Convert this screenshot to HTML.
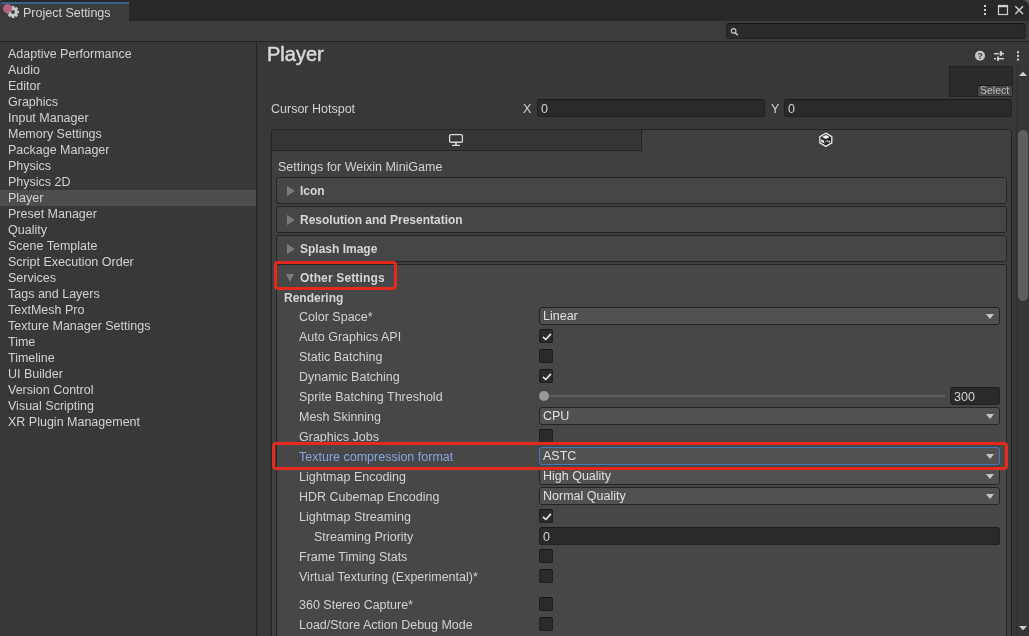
<!DOCTYPE html>
<html><head><meta charset="utf-8">
<style>
*{margin:0;padding:0;box-sizing:border-box}
html,body{width:1029px;height:636px;overflow:hidden;background:#383838;font-family:"Liberation Sans",sans-serif;font-size:12.5px;color:#d2d2d2}
.a{position:absolute}
#titlebar{left:0;top:0;width:1029px;height:21px;background:#282828;border-top-right-radius:7px;border-top-left-radius:4px}
#tab{left:0;top:2px;width:129px;height:19px;background:#3c3c3c;border-top:2px solid #37628e;border-top-left-radius:3px}
#tabtext{left:23px;top:5px;line-height:16px;color:#d4d4d4;white-space:nowrap}
#toolbar{left:0;top:21px;width:1029px;height:20px;background:#3c3c3c}
#search{left:726px;top:23px;width:300px;height:16px;background:#2a2a2a;border:1px solid #232323;border-top-color:#141414;border-radius:3px}
#tline{left:0;top:41px;width:1029px;height:1px;background:#232323}
#sidebar{left:0;top:42px;width:256px;height:594px;background:#383838}
#sdiv{left:256px;top:42px;width:1px;height:594px;background:#232323}
.li{position:absolute;left:0;width:256px;height:16px;line-height:16px;padding-left:8px;white-space:nowrap}
.sel{background:#4d4d4d}
#title{left:267px;top:42px;font-weight:normal;font-size:20px;line-height:24px;color:#d8d8d8;-webkit-text-stroke:0.5px #d8d8d8}
.lbl{position:absolute;white-space:nowrap;line-height:22px}
.field{position:absolute;height:18px;background:#2a2a2a;border:1px solid #212121;border-top-color:#1a1a1a;border-radius:3px;line-height:18px;padding-left:3px;color:#d2d2d2}
#panel{left:271px;top:129px;width:741px;height:520px;background:#404040;border:1px solid #242424;border-radius:3px}
#ptabL{left:272px;top:130px;width:370px;height:21px;background:#353535;border-right:1px solid #242424;border-bottom:1px solid #242424}
.fold{position:absolute;left:276px;width:731px;height:27px;background:#464646;border:1px solid #242424;border-radius:3px}
.fold .t{position:absolute;left:23px;top:1px;line-height:25px;font-weight:bold;font-size:12px;color:#d6d6d6;white-space:nowrap}
.tri{position:absolute;left:10px;top:8px;width:0;height:0;border-left:8px solid #7b7b7b;border-top:5px solid transparent;border-bottom:5px solid transparent}
#other{left:276px;top:264px;width:731px;height:400px;background:#474747;border:1px solid #242424;border-radius:3px}
.row{position:absolute;left:299px;height:20px;line-height:22px;white-space:nowrap}
.dd{position:absolute;left:539px;width:461px;height:18px;background:#515151;border:1px solid #242424;border-radius:3px;line-height:16px;padding-left:3px;color:#e0e0e0}
.dd:after{content:"";position:absolute;right:5px;top:6px;border-top:5px solid #c4c4c4;border-left:4px solid transparent;border-right:4px solid transparent}
.cb{position:absolute;left:539px;width:14px;height:14px;background:#2a2a2a;border:1px solid #202020;border-top-color:#151515;border-radius:2px}
.cb svg{position:absolute;left:1px;top:1px}
#scroll{left:1016px;top:66px;width:13px;height:570px;background:#363636;border-left:1px solid #303030;border-bottom-right-radius:6px}
#thumb{left:1018px;top:130px;width:10px;height:171px;background:#5f5f5f;border-radius:5px}
.red{position:absolute;border:3.5px solid #e42a1e;border-radius:4px}
</style></head><body><div id="root" style="position:absolute;left:0;top:0;width:1029px;height:636px;will-change:transform">
<div class="a" style="left:1019px;top:0;width:10px;height:10px;background:#5a5a5a"></div><div class="a" style="left:0;top:0;width:6px;height:6px;background:#4a4a4a"></div><div id="titlebar" class="a"></div>
<div id="tab" class="a"></div>
<div id="tabtext" class="a">Project Settings</div>
<!-- tab icon -->
<svg class="a" style="left:3px;top:3px" width="20" height="18" viewBox="0 0 20 18">
  <g fill="#c8c8c8"><circle cx="10" cy="9" r="4.5"/>
  <g transform="translate(10 9)"><rect x="-1.4" y="-6" width="2.8" height="12"/><rect x="-1.4" y="-6" width="2.8" height="12" transform="rotate(45)"/><rect x="-1.4" y="-6" width="2.8" height="12" transform="rotate(90)"/><rect x="-1.4" y="-6" width="2.8" height="12" transform="rotate(135)"/></g></g>
  <circle cx="10" cy="9" r="1.9" fill="#3c3c3c"/>
  <circle cx="4.5" cy="5.5" r="4.5" fill="#b4637f"/>
</svg>
<!-- window controls -->
<svg class="a" style="left:980px;top:3px" width="49" height="16" viewBox="0 0 49 16">
  <g fill="#d0d0d0"><rect x="4" y="2" width="2" height="2"/><rect x="4" y="6" width="2" height="2"/><rect x="4" y="10" width="2" height="2"/></g>
  <rect x="18.5" y="2.5" width="9" height="9" fill="none" stroke="#d0d0d0" stroke-width="1.2"/><rect x="18" y="2" width="10" height="2.2" fill="#d0d0d0"/>
  <path d="M35.3 3.3 L43 11 M43 3.3 L35.3 11" stroke="#d0d0d0" stroke-width="1.5"/>
</svg>
<div id="toolbar" class="a"></div>
<div id="search" class="a"></div>
<svg class="a" style="left:730px;top:27px" width="10" height="10" viewBox="0 0 10 10"><circle cx="3.6" cy="3.9" r="2.3" fill="none" stroke="#c8c8c8" stroke-width="1.2"/><path d="M5.2 5.6 L7.8 8.2" stroke="#c8c8c8" stroke-width="1.5"/></svg>
<div id="tline" class="a"></div>

<div id="sidebar" class="a">
</div>
<div class="a" style="left:0;top:46px;width:256px">
<div class="li" style="top:0">Adaptive Performance</div>
<div class="li" style="top:16px">Audio</div>
<div class="li" style="top:32px">Editor</div>
<div class="li" style="top:48px">Graphics</div>
<div class="li" style="top:64px">Input Manager</div>
<div class="li" style="top:80px">Memory Settings</div>
<div class="li" style="top:96px">Package Manager</div>
<div class="li" style="top:112px">Physics</div>
<div class="li" style="top:128px">Physics 2D</div>
<div class="li sel" style="top:144px">Player</div>
<div class="li" style="top:160px">Preset Manager</div>
<div class="li" style="top:176px">Quality</div>
<div class="li" style="top:192px">Scene Template</div>
<div class="li" style="top:208px">Script Execution Order</div>
<div class="li" style="top:224px">Services</div>
<div class="li" style="top:240px">Tags and Layers</div>
<div class="li" style="top:256px">TextMesh Pro</div>
<div class="li" style="top:272px">Texture Manager Settings</div>
<div class="li" style="top:288px">Time</div>
<div class="li" style="top:304px">Timeline</div>
<div class="li" style="top:320px">UI Builder</div>
<div class="li" style="top:336px">Version Control</div>
<div class="li" style="top:352px">Visual Scripting</div>
<div class="li" style="top:368px">XR Plugin Management</div>
</div>
<div id="sdiv" class="a"></div>

<!-- main header -->
<div id="title" class="a">Player</div>
<svg class="a" style="left:972px;top:48px" width="52" height="16" viewBox="0 0 52 16">
  <circle cx="8" cy="7.8" r="5" fill="#c4c4c4"/>
  <text x="8" y="11" font-family="Liberation Sans" font-weight="bold" font-size="8.5" text-anchor="middle" fill="#383838">?</text>
  <g fill="#d0d0d0"><rect x="22" y="5" width="5.2" height="1.4"/><rect x="27.8" y="3.2" width="2.3" height="4.6"/><rect x="30" y="5" width="2" height="1.4"/>
  <rect x="22" y="10" width="2" height="1.4"/><rect x="25" y="8.6" width="2" height="4.2"/><rect x="26.8" y="10" width="5.2" height="1.4"/></g>
  <g fill="#d0d0d0"><rect x="45" y="3.25" width="2" height="2"/><rect x="45" y="6.9" width="2" height="2"/><rect x="45" y="10.6" width="2" height="2"/></g>
</svg>
<div class="a" style="left:949px;top:66px;width:64px;height:31px;background:#2b2b2b;border:1px solid #232323"></div>
<div class="a" style="left:977px;top:85px;width:35px;height:11px;background:#474747;border-top:1px solid #1e1e1e;border-left:1px solid #1e1e1e;border-top-left-radius:2px;font-size:10.5px;line-height:9px;color:#bdbdbd;padding-left:2px;white-space:nowrap">Select</div>

<div class="lbl" style="left:271px;top:98px">Cursor Hotspot</div>
<div class="lbl" style="left:523px;top:98px">X</div>
<div class="field" style="left:537px;top:99px;width:228px">0</div>
<div class="lbl" style="left:771px;top:98px">Y</div>
<div class="field" style="left:784px;top:99px;width:228px">0</div>

<!-- platform panel -->
<div id="panel" class="a"></div>
<div id="ptabL" class="a"></div>
<svg class="a" style="left:448px;top:133px" width="16" height="14" viewBox="0 0 16 14">
  <rect x="1.6" y="1.65" width="12.8" height="7.6" rx="1.2" fill="none" stroke="#d8d8d8" stroke-width="1.3"/>
  <rect x="7.2" y="9.8" width="1.6" height="2.2" fill="#d8d8d8"/><rect x="3.9" y="11.8" width="8.2" height="1.2" rx=".6" fill="#d8d8d8"/>
</svg>
<svg class="a" style="left:818px;top:132px" width="16" height="16" viewBox="0 0 16 16">
  <path d="M7.85 1.2 L13.8 4.6 V10.9 L7.85 14.4 L1.9 10.9 V4.6 Z" fill="#262626" stroke="#e8e8e8" stroke-width="1.35"/>
  <path d="M7.85 3.1 L11.7 5.1 L7.85 7.1 L4 5.1 Z" fill="#f8f8f8"/>
  <path d="M3 7.2 L5.8 8.6 L6.6 11.5 L3.3 10Z" fill="#ececec"/>
  <path d="M6.5 8 L8 9.5 L7.4 10.5Z" fill="#9a9a9a"/>
  <circle cx="9.4" cy="8.9" r="0.85" fill="#d8d8d8"/><circle cx="11.4" cy="9.7" r="0.85" fill="#e8e8e8"/>
</svg>
<div class="lbl" style="left:278px;top:156px">Settings for Weixin MiniGame</div>

<div class="fold" style="top:177px"><div class="tri"></div><div class="t">Icon</div></div>
<div class="fold" style="top:206px"><div class="tri"></div><div class="t">Resolution and Presentation</div></div>
<div class="fold" style="top:235px"><div class="tri"></div><div class="t">Splash Image</div></div>
<div id="other" class="a"></div>
<div class="a" style="left:286px;top:274px;width:0;height:0;border-top:8px solid #7b7b7b;border-left:4.5px solid transparent;border-right:4.5px solid transparent"></div>
<div class="a" style="left:300px;top:265px;line-height:27px;letter-spacing:0.15px;font-weight:bold;font-size:12px;color:#d6d6d6">Other Settings</div>
<div class="a" style="left:284px;top:288px;line-height:20px;font-weight:bold;font-size:12px;color:#d6d6d6">Rendering</div>

<div class="row" style="top:306px">Color Space*</div>
<div class="dd" style="top:307px">Linear</div>
<div class="row" style="top:326px">Auto Graphics API</div>
<div class="cb" style="top:329px"><svg width="12" height="12" viewBox="0 0 12 12"><path d="M1.9 5.8 L4.8 8.5 L9.9 2.9" fill="none" stroke="#e8e8e8" stroke-width="1.6" stroke-linejoin="round"/></svg></div>
<div class="row" style="top:346px">Static Batching</div>
<div class="cb" style="top:349px"></div>
<div class="row" style="top:366px">Dynamic Batching</div>
<div class="cb" style="top:369px"><svg width="12" height="12" viewBox="0 0 12 12"><path d="M1.9 5.8 L4.8 8.5 L9.9 2.9" fill="none" stroke="#e8e8e8" stroke-width="1.6" stroke-linejoin="round"/></svg></div>
<div class="row" style="top:386px">Sprite Batching Threshold</div>
<div class="a" style="left:543px;top:395px;width:402px;height:2px;background:#5e5e5e"></div>
<div class="a" style="left:539px;top:391px;width:10px;height:10px;border-radius:5px;background:#999"></div>
<div class="field" style="left:950px;top:387px;width:50px">300</div>
<div class="row" style="top:406px">Mesh Skinning</div>
<div class="dd" style="top:407px">CPU</div>
<div class="row" style="top:426px">Graphics Jobs</div>
<div class="cb" style="top:429px"></div>
<div class="row" style="top:446px;color:#84a8e0">Texture compression format</div>
<div class="dd" style="top:447px;border-color:#3d7ac0">ASTC</div>
<div class="row" style="top:466px">Lightmap Encoding</div>
<div class="dd" style="top:467px">High Quality</div>
<div class="row" style="top:486px">HDR Cubemap Encoding</div>
<div class="dd" style="top:487px">Normal Quality</div>
<div class="row" style="top:506px">Lightmap Streaming</div>
<div class="cb" style="top:509px"><svg width="12" height="12" viewBox="0 0 12 12"><path d="M1.9 5.8 L4.8 8.5 L9.9 2.9" fill="none" stroke="#e8e8e8" stroke-width="1.6" stroke-linejoin="round"/></svg></div>
<div class="row" style="top:526px;left:314px">Streaming Priority</div>
<div class="field" style="left:539px;top:527px;width:461px">0</div>
<div class="row" style="top:546px">Frame Timing Stats</div>
<div class="cb" style="top:549px"></div>
<div class="row" style="top:566px">Virtual Texturing (Experimental)*</div>
<div class="cb" style="top:569px"></div>
<div class="row" style="top:594px">360 Stereo Capture*</div>
<div class="cb" style="top:597px"></div>
<div class="row" style="top:614px">Load/Store Action Debug Mode</div>
<div class="cb" style="top:617px"></div>

<div id="scroll" class="a"></div>
<div id="thumb" class="a"></div>
<svg class="a" style="left:1018px;top:70px" width="10" height="8"><path d="M1 6.1 L5 1.7 L9 6.1Z" fill="#cfcfcf"/></svg>
<svg class="a" style="left:1018px;top:624px" width="10" height="8"><path d="M1 2 L5 6.3 L9 2Z" fill="#cfcfcf"/></svg>

<div class="red" style="left:274px;top:261px;width:123px;height:29px"></div>
<div class="red" style="left:272px;top:442px;width:736px;height:28px"></div>
</div></body></html>
